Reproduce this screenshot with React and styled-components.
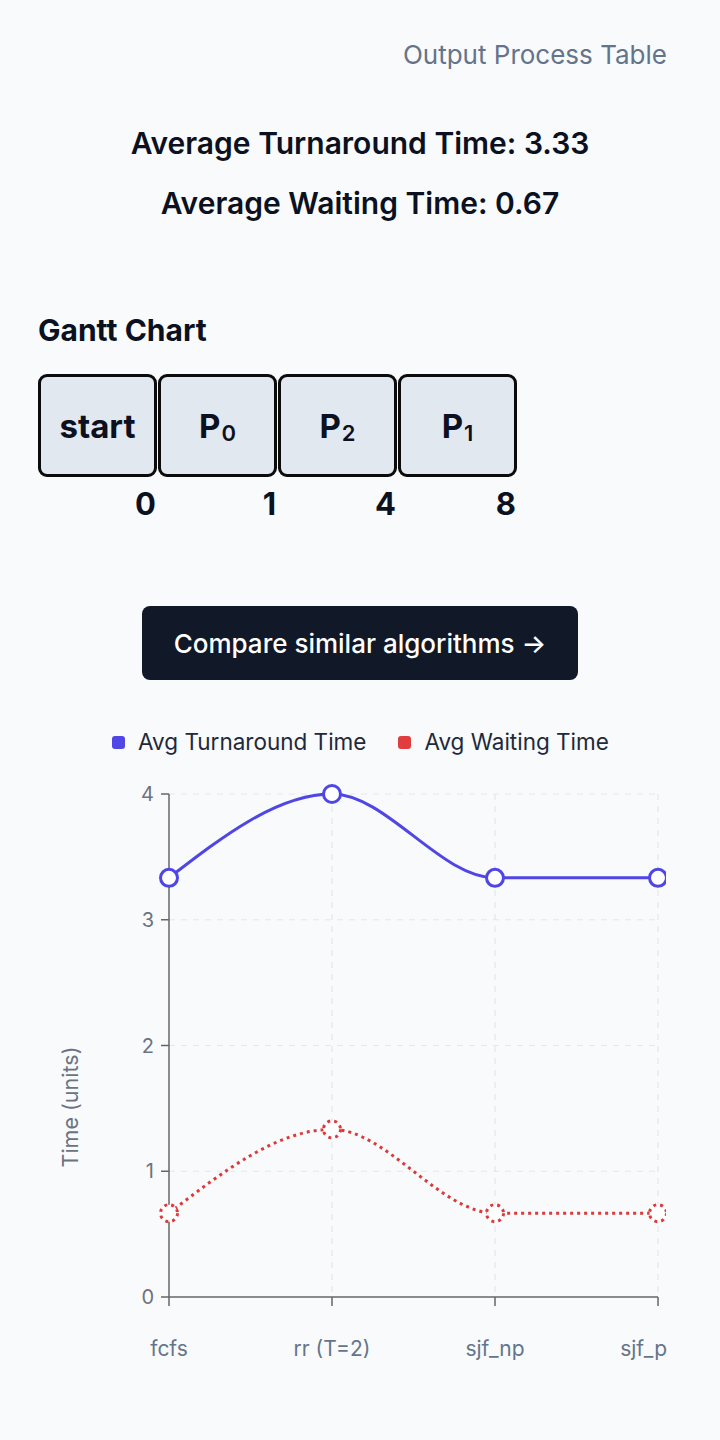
import React from "react";
import styled, { createGlobalStyle } from "styled-components";

const GlobalStyle = createGlobalStyle`
  html, body { margin: 0; padding: 0; background: #f8fafc; }
  body { font-family: Inter, "Noto Sans", sans-serif; color: #0f172a; }
`;

const Page = styled.div`
  width: 720px;
  min-height: 1440px;
  box-sizing: border-box;
  padding: 38px 0 0;
  display: flex;
  flex-direction: column;
`;

const Header = styled.div`
  text-align: right;
  padding-right: 53px;
  font-size: 26px;
  line-height: 34px;
  color: #64748b;
`;

const Stats = styled.div`
  margin-top: 51px;
  display: flex;
  flex-direction: column;
  align-items: center;
  gap: 20px;
`;

const Stat = styled.div`
  font-size: 30px;
  line-height: 40px;
  font-weight: 600;
  color: #0b1120;
`;

const Section = styled.section`
  margin-top: 89px;
  padding: 0 38px;
`;

const SectionTitle = styled.h2`
  margin: 0;
  font-size: 30px;
  line-height: 36px;
  font-weight: 700;
  color: #0b1120;
`;

const GanttRow = styled.div`
  margin-top: 26px;
  display: flex;
  gap: 1px;
`;

const GanttCell = styled.div`
  width: 119px;
  display: flex;
  flex-direction: column;
`;

const GanttBox = styled.div`
  height: 103px;
  box-sizing: border-box;
  border: 3px solid #0b0b0b;
  border-radius: 9px;
  background: #e2e8f0;
  display: flex;
  align-items: center;
  justify-content: center;
  font-size: 33px;
  font-weight: 700;
  color: #0b1120;
  sub {
    font-size: 22px;
    vertical-align: baseline;
    position: relative;
    top: 7px;
    font-weight: 600;
    margin-left: 1px;
  }
`;

const GanttTime = styled.div`
  text-align: right;
  padding-right: 1px;
  margin-top: 9px;
  font-size: 31px;
  line-height: 36px;
  font-weight: 700;
  color: #0b1120;
`;

const ButtonRow = styled.div`
  margin-top: 84px;
  display: flex;
  justify-content: center;
`;

const CompareButton = styled.button`
  width: 436px;
  height: 74px;
  border: none;
  border-radius: 8px;
  background: #111827;
  color: #fff;
  font-family: Inter, "Noto Sans", sans-serif;
  font-size: 26px;
  font-weight: 500;
  cursor: pointer;
`;

const Legend = styled.div`
  margin-top: 48px;
  display: flex;
  justify-content: center;
  gap: 32px;
  padding-left: 1px;
`;

const LegendItem = styled.div`
  display: flex;
  align-items: center;
  gap: 13px;
  font-size: 22.5px;
  line-height: 28px;
  color: #1e293b;
`;

const Swatch = styled.span`
  width: 13px;
  height: 13px;
  border-radius: 3px;
  background: ${(p) => p.$color};
`;

const ChartSvg = styled.svg`
  display: block;
  margin-top: 15px;
`;

const BLUE = "#4f46e5";
const RED = "#dc3a3a";
const TOP = 770;

const xs = [169, 332, 495, 658];
const labels = ["fcfs", "rr (T=2)", "sjf_np", "sjf_p"];
const tat = [10 / 3, 4, 10 / 3, 10 / 3];
const wt = [2 / 3, 4 / 3, 2 / 3, 2 / 3];
const yOf = (v) => 1296 - v * 125.75 - TOP;

function monotonePath(pts) {
  const n = pts.length;
  const sign = (v) => (v < 0 ? -1 : 1);
  const s = [];
  for (let i = 0; i < n - 1; i++) s.push((pts[i + 1][1] - pts[i][1]) / (pts[i + 1][0] - pts[i][0]));
  const t = new Array(n).fill(0);
  for (let i = 1; i < n - 1; i++) {
    const h0 = pts[i][0] - pts[i - 1][0];
    const h1 = pts[i + 1][0] - pts[i][0];
    const s0 = s[i - 1];
    const s1 = s[i];
    const p = (s0 * h1 + s1 * h0) / (h0 + h1);
    const sg = (s0 === 0 ? 0 : sign(s0)) + (s1 === 0 ? 0 : sign(s1));
    t[i] = sg * Math.min(Math.abs(s0), Math.abs(s1), 0.5 * Math.abs(p)) || 0;
  }
  t[0] = (3 * s[0] - t[1]) / 2;
  t[n - 1] = (3 * s[n - 2] - t[n - 2]) / 2;
  let d = `M${pts[0][0]},${pts[0][1]}`;
  for (let i = 0; i < n - 1; i++) {
    const dx = (pts[i + 1][0] - pts[i][0]) / 3;
    d += ` C${pts[i][0] + dx},${pts[i][1] + dx * t[i]} ${pts[i + 1][0] - dx},${pts[i + 1][1] - dx * t[i + 1]} ${pts[i + 1][0]},${pts[i + 1][1]}`;
  }
  return d;
}

const gantt = [
  { label: "start", time: 0 },
  { label: "P", sub: "0", time: 1 },
  { label: "P", sub: "2", time: 4 },
  { label: "P", sub: "1", time: 8 },
];

function Chart() {
  const tatPts = xs.map((x, i) => [x, yOf(tat[i])]);
  const wtPts = xs.map((x, i) => [x, yOf(wt[i])]);
  const yTicks = [0, 1, 2, 3, 4];
  return (
    <ChartSvg width="720" height="610" viewBox="0 0 720 610">
      <defs>
        <clipPath id="plot">
          <rect x="0" y="0" width="666" height="610" />
        </clipPath>
      </defs>
      {yTicks.slice(1).map((v) => (
        <line key={"h" + v} x1={169} x2={658} y1={yOf(v)} y2={yOf(v)} stroke="#e5e7eb" strokeDasharray="6 6" strokeWidth="1.2" />
      ))}
      {xs.slice(1).map((x) => (
        <line key={"v" + x} x1={x} x2={x} y1={yOf(4)} y2={yOf(0)} stroke="#e5e7eb" strokeDasharray="6 6" strokeWidth="1.2" />
      ))}
      <line x1={169} x2={169} y1={yOf(4)} y2={yOf(0)} stroke="#666" strokeWidth="1.5" />
      <line x1={169} x2={658} y1={yOf(0)} y2={yOf(0)} stroke="#666" strokeWidth="1.5" />
      {yTicks.map((v) => (
        <g key={"yt" + v}>
          <line x1={161} x2={169} y1={yOf(v)} y2={yOf(v)} stroke="#666" strokeWidth="1.5" />
          <text x={154} y={yOf(v) + 7} textAnchor="end" fontSize="20" fill="#6b7280" fontFamily="Inter, sans-serif">
            {v}
          </text>
        </g>
      ))}
      {xs.map((x, i) => (
        <g key={"xt" + i}>
          <line x1={x} x2={x} y1={yOf(0)} y2={yOf(0) + 9} stroke="#666" strokeWidth="1.5" />
          <text
            x={i === xs.length - 1 ? 667 : x}
            y={yOf(0) + 59}
            textAnchor={i === xs.length - 1 ? "end" : "middle"}
            fontSize="21"
            fill="#64748b"
            fontFamily="Inter, sans-serif"
          >
            {labels[i]}
          </text>
        </g>
      ))}
      <text
        transform={`translate(78 ${1106 - TOP}) rotate(-90)`}
        textAnchor="middle"
        fontSize="21.5"
        fill="#6b7280"
        fontFamily="Inter, sans-serif"
      >
        Time (units)
      </text>
      <g clipPath="url(#plot)">
        <path d={monotonePath(tatPts)} fill="none" stroke={BLUE} strokeWidth="3" />
        {tatPts.map(([x, y], i) => (
          <circle key={"td" + i} cx={x} cy={y} r="8.5" fill="#fff" stroke={BLUE} strokeWidth="3" />
        ))}
        <path d={monotonePath(wtPts)} fill="none" stroke={RED} strokeWidth="3" strokeDasharray="3 4" />
        {wtPts.map(([x, y], i) => (
          <circle key={"wd" + i} cx={x} cy={y} r="8.5" fill="#fff" stroke={RED} strokeWidth="3" strokeDasharray="3 4" />
        ))}
      </g>
    </ChartSvg>
  );
}

export default function App() {
  return (
    <>
      <GlobalStyle />
      <Page>
        <Header>Output Process Table</Header>
        <Stats>
          <Stat>Average Turnaround Time: 3.33</Stat>
          <Stat>Average Waiting Time: 0.67</Stat>
        </Stats>
        <Section>
          <SectionTitle>Gantt Chart</SectionTitle>
          <GanttRow>
            {gantt.map((g, i) => (
              <GanttCell key={i}>
                <GanttBox>
                  {g.label}
                  {g.sub && <sub>{g.sub}</sub>}
                </GanttBox>
                <GanttTime>{g.time}</GanttTime>
              </GanttCell>
            ))}
          </GanttRow>
        </Section>
        <ButtonRow>
          <CompareButton>Compare similar algorithms →</CompareButton>
        </ButtonRow>
        <Legend>
          <LegendItem>
            <Swatch $color={BLUE} />
            Avg Turnaround Time
          </LegendItem>
          <LegendItem>
            <Swatch $color="#e03e3e" />
            Avg Waiting Time
          </LegendItem>
        </Legend>
        <Chart />
      </Page>
    </>
  );
}
